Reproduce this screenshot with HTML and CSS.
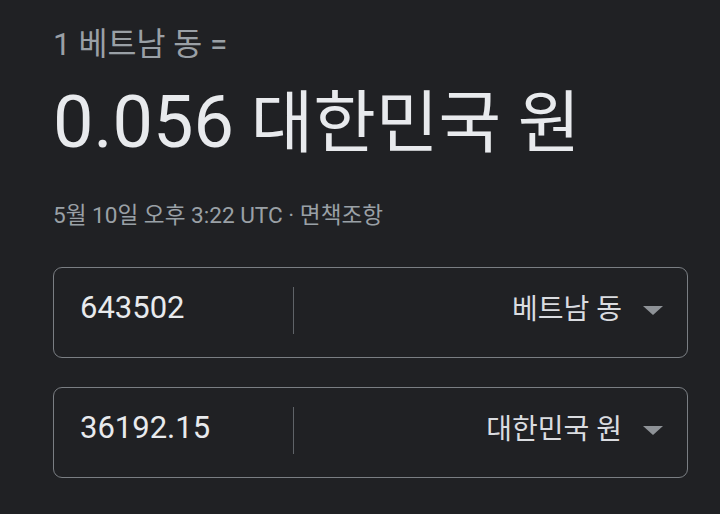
FILE: index.html
```html
<!DOCTYPE html>
<html lang="ko">
<head>
  <meta charset="UTF-8" />
  <title>환율 변환</title>
  <link rel="stylesheet" href="styles.css">
</head>
<body>

<!-- 환율 결과 -->
<div class="rate-from">1 베트남 동 =</div>
<h1 class="rate-to"><span class="num">0.056</span> 대한민국 원</h1>
<div class="rate-date">5월 10일 오후 3:22 UTC · 면책조항</div>

<!-- 변환 입력 -->
<div class="conv-box">
  <div class="amount"><input type="text" value="643502"></div>
  <div class="sep"></div>
  <div class="currency">
    <span class="cur-name">베트남 동</span>
    <span class="arrow"></span>
  </div>
</div>

<div class="conv-box">
  <div class="amount"><input type="text" value="36192.15"></div>
  <div class="sep"></div>
  <div class="currency">
    <span class="cur-name">대한민국 원</span>
    <span class="arrow"></span>
  </div>
</div>

</body>
</html>
```

FILE: styles.css
```css
body {
  font-family: Roboto, "Noto Sans CJK KR", sans-serif;
  background: #202124;
  color: #e8eaed;
  margin: 0;
  padding: 28px 32px 0 53px;
}
.rate-from {
  font-size: 31.5px;
  line-height: 34px;
  color: #9aa0a6;
}
.rate-to {
  font-size: 68px;
  line-height: 76px;
  font-weight: normal;
  margin: 23px 0 0 0;
}
.rate-to .num {
  font-size: 72px;
}
.rate-date {
  font-size: 22.6px;
  line-height: 26px;
  color: #9aa0a6;
  margin-top: 41px;
}
.conv-box {
  display: flex;
  align-items: center;
  box-sizing: border-box;
  height: 91px;
  margin-top: 38px;
  padding-bottom: 5px;
  border: 1px solid #7a7e83;
  border-radius: 9px;
}
.conv-box + .conv-box {
  margin-top: 29px;
}
.amount {
  flex: 0 0 239px;
  box-sizing: border-box;
  padding: 0 10px 5px 26px;
}
.amount input {
  width: 100%;
  background: none;
  border: none;
  outline: none;
  padding: 0;
  margin: 0;
  font-family: Roboto, sans-serif;
  font-size: 31px;
  line-height: 36px;
  color: #e8eaed;
}
.sep {
  width: 1px;
  height: 47px;
  background: #5f6368;
}
.currency {
  flex: 1;
  display: flex;
  align-items: center;
  justify-content: flex-end;
  padding-right: 24px;
}
.cur-name {
  font-size: 28px;
  line-height: 36px;
  color: #dadce0;
}
.arrow {
  width: 0;
  height: 0;
  margin-left: 21px;
  border-left: 10px solid transparent;
  border-right: 10px solid transparent;
  border-top: 9px solid #8e9297;
}
```
